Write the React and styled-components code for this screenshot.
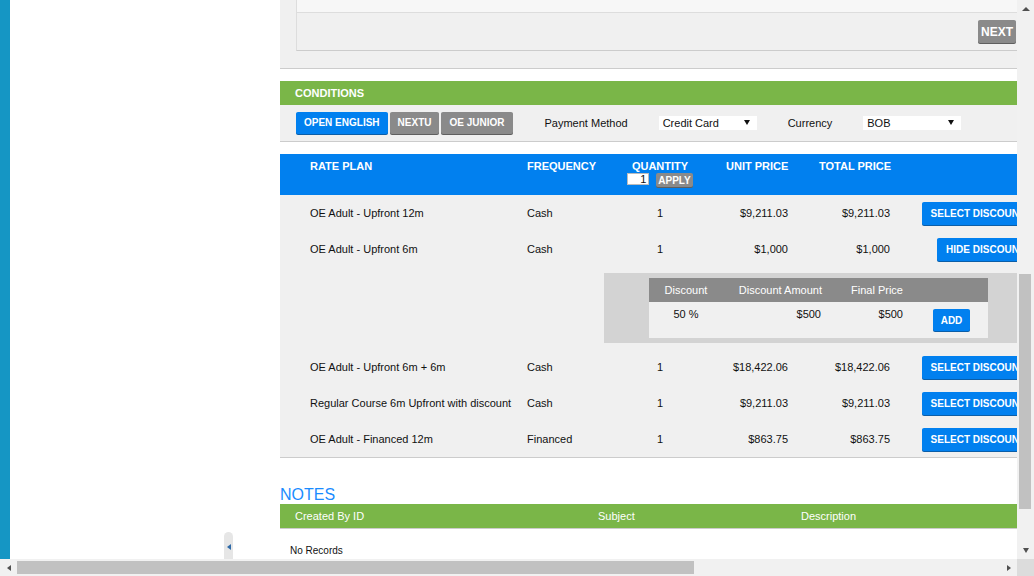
import React from "react"
import styled, { createGlobalStyle } from "styled-components"

const GlobalStyle = createGlobalStyle`
  html, body {
    margin: 0;
    padding: 0;
    overflow: hidden;
  }
  body {
    font-family: "Liberation Sans", Arial, sans-serif;
    font-size: 11px;
    color: #111;
    background: #fff;
  }
  * {
    box-sizing: border-box;
  }
`

const BLUE = "#0180ef"
const GREEN = "#7ab648"
const GREY = "#8a8a8a"

const Window = styled.div`
  width: 1034px;
  height: 576px;
  display: grid;
  grid-template-columns: 1017px 17px;
  grid-template-rows: 559px 17px;
`

const Viewport = styled.div`
  display: flex;
  overflow: hidden;
  background: #fff;
`

const Strip = styled.div`
  width: 10px;
  flex: none;
  background: #1596c4;
`

const Sidebar = styled.div`
  width: 270px;
  flex: none;
  display: flex;
  align-items: flex-end;
  padding-left: 214px;
`

const CollapseTab = styled.div`
  width: 9px;
  height: 27px;
  background: #e6e6e6;
  border-radius: 5px 5px 0 0;
  display: flex;
  align-items: center;
  justify-content: center;
  padding-top: 2px;
`

const Arrow = styled.span`
  width: 0;
  height: 0;
  border-style: solid;
  ${(p) =>
    p.dir === "left"
      ? `border-width: 3px 4px 3px 0; border-color: transparent ${p.color || "#505050"} transparent transparent;`
      : p.dir === "right"
      ? `border-width: 3px 0 3px 4px; border-color: transparent transparent transparent ${p.color || "#505050"};`
      : p.dir === "up"
      ? `border-width: 0 4px 4px 4px; border-color: transparent transparent ${p.color || "#505050"} transparent;`
      : `border-width: 5px 3.5px 0 3.5px; border-color: ${p.color || "#505050"} transparent transparent transparent;`}
`

const Content = styled.div`
  width: 737px;
  flex: none;
`

const TopPanel = styled.div`
  background: #f0f0f0;
  padding: 0 0 17px 16px;
  border-bottom: 1px solid #ccc;
`

const InnerBox = styled.div`
  border-left: 1px solid #ddd;
  border-bottom: 1px solid #ccc;
`

const InnerHead = styled.div`
  height: 13px;
  background: #f7f7f7;
  border-bottom: 1px solid #ddd;
`

const InnerActions = styled.div`
  height: 37px;
  display: flex;
  align-items: center;
  justify-content: flex-end;
  padding-right: 1px;
`

const Button = styled.button`
  border: none;
  margin: 0;
  height: ${(p) => p.h || 22}px;
  padding: 0 ${(p) => p.px ?? 8}px;
  background: ${(p) => (p.grey ? GREY : BLUE)};
  color: #fff;
  font-family: "Liberation Sans", Arial, sans-serif;
  font-weight: bold;
  font-size: ${(p) => p.fs || 10}px;
  border-radius: 2px;
  box-shadow: 0 1px 0 ${(p) => (p.grey ? "#5f5f5f" : "#0b5ea8")};
  white-space: nowrap;
  flex: none;
`

const SectionBar = styled.div`
  margin-top: 12px;
  height: 24px;
  line-height: 24px;
  background: ${GREEN};
  color: #fff;
  font-weight: bold;
  font-size: 11px;
  padding-left: 15px;
`

const Toolbar = styled.div`
  height: 37px;
  background: #f0f0f0;
  border-bottom: 1px solid #ccc;
  display: flex;
  align-items: center;
  padding: 0 0 1px 16px;
  gap: 31px;
`

const ButtonGroup = styled.div`
  display: flex;
  gap: 2px;
  margin-right: 1px;
`

const Label = styled.span`
  font-size: 11px;
  color: #111;
`

const FakeSelect = styled.div`
  width: 98px;
  height: 14px;
  background: #fff;
  display: flex;
  align-items: center;
  justify-content: space-between;
  padding: 0 7px 0 4px;
  font-size: 11px;
`

const RateTable = styled.div`
  margin-top: 12px;
  width: 754px;
  background: #f0f0f0;
  border-bottom: 1px solid #ccc;
`

const COLS = "30px 217px 93px 80px 98px 102px 134px"

const HeadRow = styled.div`
  display: grid;
  grid-template-columns: ${COLS};
  height: 41px;
  background: ${BLUE};
  color: #fff;
  font-weight: bold;
  font-size: 11px;
  line-height: 13px;
  padding-top: 6px;
`

const HeadCell = styled.div`
  padding-left: ${(p) => p.pl || 0}px;
  ${(p) => p.center && "display: flex; flex-direction: column; align-items: center;"}
`

const QtyControls = styled.div`
  display: flex;
  align-items: flex-start;
  gap: 7px;
`

const QtyInput = styled.div`
  width: 22px;
  height: 12px;
  background: #fff;
  border: 1px solid #bbb;
  color: #111;
  font-weight: normal;
  font-size: 11px;
  line-height: 10px;
  text-align: right;
  padding-right: 2px;
`

const Row = styled.div`
  display: grid;
  grid-template-columns: ${COLS};
  height: 36px;
  align-items: center;
  font-size: 11px;
`

const Cell = styled.div`
  text-align: ${(p) => p.align || "left"};
  padding-right: ${(p) => p.pr || 0}px;
  white-space: nowrap;
  ${(p) => p.end && "display: flex; justify-content: flex-end;"}
`

const DiscountPanel = styled.div`
  margin: 6px 0 6px 324px;
  background: #d3d3d3;
  padding: 5px 0 5px 45px;
`

const DCOLS = "74px 110px 80px 75px"

const DiscountHead = styled.div`
  width: 339px;
  display: grid;
  grid-template-columns: ${DCOLS};
  height: 24px;
  line-height: 24px;
  background: ${GREY};
  color: #fff;
  font-size: 11px;
`

const DiscountBody = styled.div`
  width: 339px;
  display: grid;
  grid-template-columns: ${DCOLS};
  height: 36px;
  background: #f0f0f0;
  font-size: 11px;
  line-height: 13px;
  padding-top: 6px;
`

const DCell = styled.div`
  text-align: ${(p) => p.align || "center"};
  padding-right: ${(p) => p.pr || 0}px;
  ${(p) => p.btn && "display: flex; justify-content: center; padding-top: 1px; padding-left: 2px;"}
`

const NotesTitle = styled.div`
  margin-top: 27px;
  font-size: 16px;
  line-height: 19px;
  color: #1a8cff;
`

const NotesHead = styled.div`
  display: grid;
  grid-template-columns: 303px 203px 1fr;
  height: 25px;
  line-height: 24px;
  background: ${GREEN};
  border-bottom: 1px solid #ccc;
  color: #fff;
  font-size: 11px;
  padding-left: 15px;
`

const NoRecords = styled.div`
  margin-top: 16px;
  padding-left: 10px;
  font-size: 10px;
  line-height: 12px;
`

const VScroll = styled.div`
  background: #f1f1f1;
  display: flex;
  flex-direction: column;
  align-items: center;
`

const ScrollArrowBox = styled.div`
  width: 17px;
  height: 17px;
  flex: none;
  display: flex;
  align-items: center;
  justify-content: center;
`

const VTrack = styled.div`
  flex: 1;
  width: 100%;
  padding: 257px 3px 0 2px;
`

const VThumb = styled.div`
  height: 235px;
  background: #c1c1c1;
`

const HScroll = styled.div`
  background: #f1f1f1;
  display: flex;
  align-items: center;
`

const HTrack = styled.div`
  flex: 1;
  height: 100%;
  padding: 2px 0;
`

const HThumb = styled.div`
  width: 677px;
  height: 100%;
  background: #c1c1c1;
`

const Corner = styled.div`
  background: #dcdcdc;
`

const rates = [
  { plan: "OE Adult - Upfront 12m", freq: "Cash", unit: "$9,211.03", total: "$9,211.03", action: "SELECT DISCOUNT" },
  { plan: "OE Adult - Upfront 6m", freq: "Cash", unit: "$1,000", total: "$1,000", action: "HIDE DISCOUNT", open: true },
  { plan: "OE Adult - Upfront 6m + 6m", freq: "Cash", unit: "$18,422.06", total: "$18,422.06", action: "SELECT DISCOUNT" },
  { plan: "Regular Course 6m Upfront with discount", freq: "Cash", unit: "$9,211.03", total: "$9,211.03", action: "SELECT DISCOUNT" },
  { plan: "OE Adult - Financed 12m", freq: "Financed", unit: "$863.75", total: "$863.75", action: "SELECT DISCOUNT" },
]

const RateRow = ({ r }) => (
  <Row>
    <span />
    <Cell>{r.plan}</Cell>
    <Cell>{r.freq}</Cell>
    <Cell align="center">1</Cell>
    <Cell align="right" pr={10}>{r.unit}</Cell>
    <Cell align="right" pr={10}>{r.total}</Cell>
    <Cell end>
      <Button h={23} px={9}>{r.action}</Button>
    </Cell>
  </Row>
)

export default function App() {
  return (
    <>
      <GlobalStyle />
      <Window>
        <Viewport>
          <Strip />
          <Sidebar>
            <CollapseTab>
              <Arrow dir="left" color="#2f6aa8" />
            </CollapseTab>
          </Sidebar>
          <Content>
            <TopPanel>
              <InnerBox>
                <InnerHead />
                <InnerActions>
                  <Button grey h={23} px={3} fs={12}>NEXT</Button>
                </InnerActions>
              </InnerBox>
            </TopPanel>

            <SectionBar>CONDITIONS</SectionBar>
            <Toolbar>
              <ButtonGroup>
                <Button>OPEN ENGLISH</Button>
                <Button grey>NEXTU</Button>
                <Button grey>OE JUNIOR</Button>
              </ButtonGroup>
              <Label>Payment Method</Label>
              <FakeSelect>
                Credit Card <Arrow dir="down" color="#111" />
              </FakeSelect>
              <Label>Currency</Label>
              <FakeSelect>
                BOB <Arrow dir="down" color="#111" />
              </FakeSelect>
            </Toolbar>

            <RateTable>
              <HeadRow>
                <span />
                <HeadCell>RATE PLAN</HeadCell>
                <HeadCell>FREQUENCY</HeadCell>
                <HeadCell center>
                  QUANTITY
                  <QtyControls>
                    <QtyInput>1</QtyInput>
                    <Button grey h={14} px={2} fs={10}>APPLY</Button>
                  </QtyControls>
                </HeadCell>
                <HeadCell pl={26}>UNIT PRICE</HeadCell>
                <HeadCell pl={21}>TOTAL PRICE</HeadCell>
                <span />
              </HeadRow>
              {rates.map((r) => (
                <React.Fragment key={r.plan}>
                  <RateRow r={r} />
                  {r.open && (
                    <DiscountPanel>
                      <DiscountHead>
                        <DCell>Discount</DCell>
                        <DCell align="right" pr={11}>Discount Amount</DCell>
                        <DCell align="right" pr={10}>Final Price</DCell>
                        <span />
                      </DiscountHead>
                      <DiscountBody>
                        <DCell>50 %</DCell>
                        <DCell align="right" pr={12}>$500</DCell>
                        <DCell align="right" pr={10}>$500</DCell>
                        <DCell btn>
                          <Button px={8}>ADD</Button>
                        </DCell>
                      </DiscountBody>
                    </DiscountPanel>
                  )}
                </React.Fragment>
              ))}
            </RateTable>

            <NotesTitle>NOTES</NotesTitle>
            <NotesHead>
              <span>Created By ID</span>
              <span>Subject</span>
              <span>Description</span>
            </NotesHead>
            <NoRecords>No Records</NoRecords>
          </Content>
        </Viewport>

        <VScroll>
          <ScrollArrowBox>
            <Arrow dir="up" />
          </ScrollArrowBox>
          <VTrack>
            <VThumb />
          </VTrack>
          <ScrollArrowBox>
            <Arrow dir="down" />
          </ScrollArrowBox>
        </VScroll>

        <HScroll>
          <ScrollArrowBox>
            <Arrow dir="left" />
          </ScrollArrowBox>
          <HTrack>
            <HThumb />
          </HTrack>
          <ScrollArrowBox>
            <Arrow dir="right" />
          </ScrollArrowBox>
        </HScroll>
        <Corner />
      </Window>
    </>
  )
}
